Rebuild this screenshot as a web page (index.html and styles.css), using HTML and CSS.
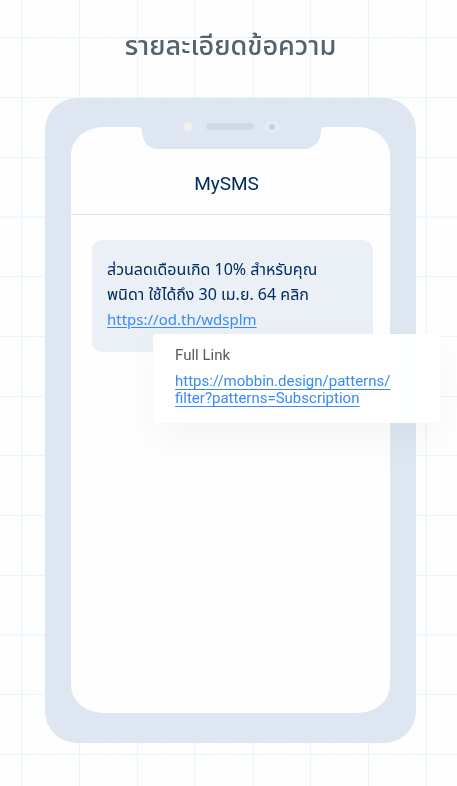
FILE: index.html
```html
<!DOCTYPE html>
<html lang="th">
<head>
<meta charset="utf-8">
<meta name="viewport" content="width=device-width, initial-scale=1">
<title>รายละเอียดข้อความ</title>
<link rel="stylesheet" href="styles.css">
</head>
<body>
<svg class="grid" aria-hidden="true">
  <path class="grid-minor" d="M33.500 0V3000M56.500 0V3000M68.500 0V3000M91.500 0V3000M102.500 0V3000M114.500 0V3000M160.500 0V3000M218.500 0V3000M230.500 0V3000M264.500 0V3000M276.500 0V3000M287.500 0V3000M334.500 0V3000M357.500 0V3000M379.500 0V3000M391.500 0V3000M414.500 0V3000M0 25.500H3000M0 49.500H3000M0 73.500H3000M0 133.500H3000M0 145.500H3000M0 623.500H3000M0 670.500H3000M0 682.500H3000M0 778.500H3000"/>
  <path class="grid-major" d="M79.500 0V3000M137.500 0V3000M310.500 0V3000M368.500 0V3000M0 37.500H3000M0 97.500H3000M0 157.500H3000M0 276.500H3000M0 336.500H3000M0 396.500H3000M0 455.500H3000M0 515.500H3000M0 575.500H3000M0 694.500H3000M0 754.500H3000"/>
  <path class="grid-wide" d="M22 0V3000M195 0V3000M253 0V3000M426 0V3000M0 217H3000M0 635H3000"/>
</svg>
<main class="page">
  <h1 class="title">รายละเอียดข้อความ</h1>
  <div class="phone">
    <section class="screen">
      <svg class="notch" viewBox="0 0 188 22" aria-hidden="true">
        <path fill="#dee6f2" d="M0 0H188Q184 0 184 4C184 14 177 22 167 22H21C11 22 5 14 5 4Q5 0 0 0Z"/>
        <circle cx="51" cy="0" r="5" fill="#eeefee"/>
        <rect x="69" y="-4" width="48" height="7" rx="3.500" fill="#d1d8e4"/>
        <circle cx="135" cy="0" r="7" fill="#e4ebf5"/>
        <circle cx="135" cy="0" r="3" fill="#c0d5e3"/>
      </svg>
      <header class="app-bar"><h2 class="app-name">MySMS</h2></header>
      <div class="thread">
        <article class="bubble">
          <p class="message">ส่วนลดเดือนเกิด 10% สำหรับคุณ<br>พนิดา ใช้ได้ถึง 30 เม.ย. 64 คลิก<br><a class="link short-link" href="https://od.th/wdsplm">https://od.th/wdsplm</a></p>
          <aside class="popover">
            <h3 class="popover-title">Full Link</h3>
            <a class="link full-link" href="https://mobbin.design/patterns/filter?patterns=Subscription">https://mobbin.design/patterns/<wbr>filter?patterns=Subscription</a>
          </aside>
        </article>
      </div>
    </section>
  </div>
</main>
</body>
</html>
```
FILE: styles.css
```css
* {
  box-sizing: border-box;
}

body {
  margin: 0;
  background: #fefefe;
  color: #002b60;
  font-family: Roboto, "Noto Sans Thai", sans-serif;
}

h1, h2, h3, p {
  margin: 0;
  font-weight: 400;
}

.grid {
  position: fixed;
  inset: 0;
  z-index: -1;
  width: 100%;
  height: 100%;
  fill: none;
}

.grid-minor { stroke: #fafcfd; }
.grid-major { stroke: #e7f5fc; }
.grid-wide { stroke: #f0f9fe; stroke-width: 2px; }

.page {
  display: flex;
  flex-direction: column;
  min-height: 100vh;
  padding: 26px 41px 43px 45px;
}

.title {
  margin-bottom: 32px;
  color: #53626c;
  font-size: 27px;
  font-weight: 500;
  line-height: 40px;
  text-align: center;
}

.phone {
  display: flex;
  flex: 1;
  padding: 29px 26px 30px;
  border-radius: 32px;
  background: #dee6f2;
}

.screen {
  display: flex;
  flex: 1;
  flex-direction: column;
  min-width: 0;
  border-radius: 32px / 28px;
  background: #fefefe;
}

.notch {
  display: block;
  align-self: center;
  width: 188px;
  height: 22px;
  overflow: visible;
}

.app-bar {
  padding: 20px 0 15px;
  border-bottom: 1px solid #dce5f1;
  text-align: center;
}

.app-name {
  padding-right: 8px;
  font-size: 19px;
  line-height: 30px;
}

.thread {
  padding: 25px 17px 24px 21px;
}

.bubble {
  position: relative;
  padding: 17px 15px 20px;
  border-radius: 10px;
  background: #ebf0f7;
}

.message {
  font-family: "Noto Sans", "Noto Sans Thai", sans-serif;
  font-size: 16px;
  line-height: 25px;
}

.link {
  color: #388bf5;
  text-decoration: underline;
  text-underline-offset: 2px;
}

.short-link {
  font-size: 15px;
}

.popover {
  position: absolute;
  top: 94px;
  right: -67px;
  left: 61px;
  padding: 11px 22px 16px;
  border-radius: 3px;
  background: rgb(255 255 255 / 97%);
  box-shadow: 0 16px 40px rgb(0 0 0 / 4%);
}

.popover-title {
  margin-bottom: 8px;
  color: #595959;
  font-size: 15px;
  line-height: 20px;
}

.full-link {
  display: block;
  font-size: 15px;
  line-height: 17px;
  text-underline-offset: 3px;
}
```
